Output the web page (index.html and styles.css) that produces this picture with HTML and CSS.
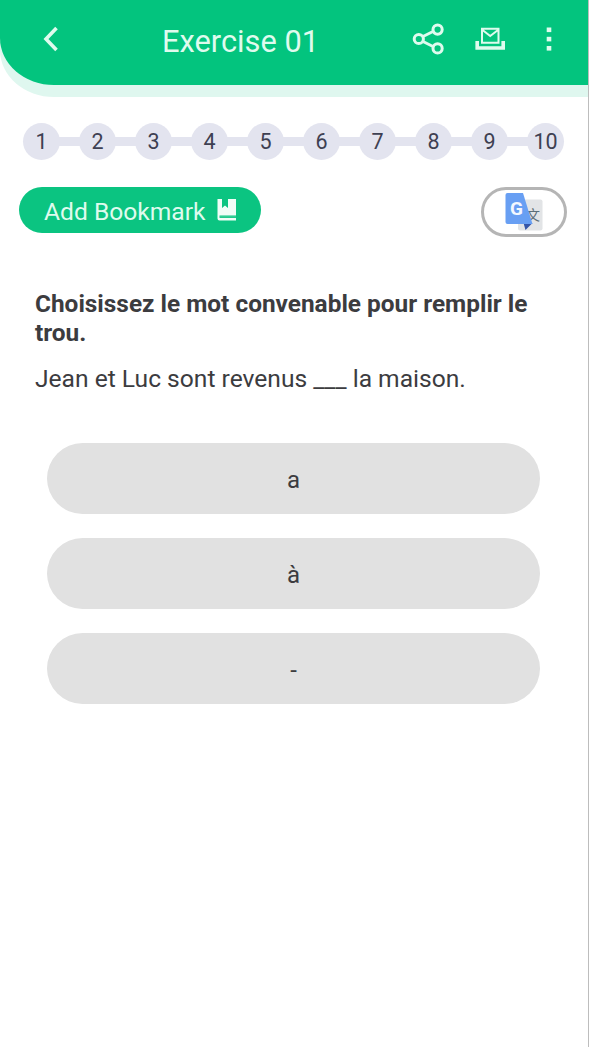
FILE: index.html
```
<!DOCTYPE html>
<html lang="fr">
<head>
<meta charset="UTF-8">
<meta name="viewport" content="width=device-width, initial-scale=1.0">
<title>Exercise 01</title>
<link rel="stylesheet" href="styles.css">
</head>
<body>
<div class="screen">
  <header>
    <svg class="back" width="16" height="26" viewBox="0 0 16 26"><path d="M14.5 2 L4 13 L14.5 24"/></svg>
    <h1>Exercise 01</h1>
    <svg class="share" width="32" height="32" viewBox="0 0 32 32">
      <path d="M6 16 L25 6.5 M6 16 L25 25.5"/>
      <circle cx="6.8" cy="16" r="4.6"/>
      <circle cx="25.6" cy="6.6" r="4.6"/>
      <circle cx="25.6" cy="25.4" r="4.6"/>
    </svg>
    <svg class="inbox" width="30" height="24" viewBox="0 0 30 24">
      <path class="tray" d="M2.2 14 V21 H28.2 V14"/>
      <path class="mail" d="M7 1.8 H23.5 V15.8 H7 Z M7.5 3 L15.2 9 L23 3"/>
    </svg>
    <svg class="menu" width="6" height="26" viewBox="0 0 6 26">
      <rect x="0.7" y="1.5" width="4.6" height="4.6"/>
      <rect x="0.7" y="10.8" width="4.6" height="4.6"/>
      <rect x="0.7" y="20" width="4.6" height="4.6"/>
    </svg>
  </header>

  <ol class="steps">
    <li>1</li>
    <li>2</li>
    <li>3</li>
    <li>4</li>
    <li>5</li>
    <li>6</li>
    <li>7</li>
    <li>8</li>
    <li>9</li>
    <li>10</li>
  </ol>

  <div class="tools">
    <button class="bookmark">
      <span>Add Bookmark</span>
      <svg width="20" height="24" viewBox="0 0 20 24">
        <path d="M0.5 1 H5 V10 L8 7.6 L11 10 V1 H19 V17.5 H2.5 V18.8 H19 V22.5 H2.5 Q0.5 22.5 0.5 20.5 Z"/>
        <path class="line" d="M2.5 19.3 H19"/>
      </svg>
    </button>
    <button class="translate">
      <svg width="40" height="40" viewBox="0 0 40 40">
        <rect class="page" x="14" y="7.5" width="24.5" height="31" rx="2"/>
        <text class="wen" x="29" y="28">文</text>
        <path class="fold" d="M19.5 31 H28.5 L21.5 38 Z"/>
        <path class="front" d="M3.5 1 H19 L28.5 32 H3.5 Q1.5 32 1.5 30 V3 Q1.5 1 3.5 1 Z"/>
        <text class="g" x="12.5" y="23">G</text>
      </svg>
    </button>
  </div>

  <main>
    <h2>Choisissez le mot convenable pour remplir le trou.</h2>
    <p>Jean et Luc sont revenus ___ la maison.</p>
    <div class="answers">
      <button class="answer">a</button>
      <button class="answer">à</button>
      <button class="answer">-</button>
    </div>
  </main>
</div>
</body>
</html>
```
FILE: styles.css
```
body {font-family: Roboto, sans-serif; background-color: #fff; color: #3c3c3f; margin: 0; padding: 0;}
svg {display: block; flex: none;}
button {font-family: inherit; border: none; cursor: pointer;}

.screen {
  box-sizing: border-box;
  min-height: 1047px;
  border-right: 1px solid #bdbdbd;
}

header {
  display: flex;
  align-items: center;
  box-sizing: border-box;
  height: 85px;
  padding: 0 36px 7px 42px;
  background-color: #03c47e;
  border-bottom-left-radius: 54px 47px;
  box-shadow: 0 12px 0 #dff7ef;
}
header h1 {
  width: 250px;
  margin: 4px 0 0 104px;
  color: #dffbee;
  font-size: 30.8px;
  font-weight: 400;
}
header path, header circle {fill: none; stroke: #dffbee;}
.back path {stroke-width: 3.6;}
.share path, .share circle {stroke-width: 3;}
.share circle {fill: #03c47e;}
.inbox {margin: 0 0 0 31px;}
.inbox .tray {stroke-width: 3.6;}
.inbox .mail {stroke-width: 2;}
.menu {margin-left: auto;}
.menu rect {fill: #dffbee;}

.steps {
  display: flex;
  gap: 19px;
  list-style: none;
  margin: 38px 0 0 23px;
  padding: 0;
}
.steps li {
  position: relative;
  width: 37px;
  height: 37px;
  border-radius: 50%;
  background-color: #e3e4ef;
  color: #3e4052;
  font-size: 21.5px;
  line-height: 38px;
  text-align: center;
}
/* connector to the previous step */
.steps li + li::before {
  content: "";
  position: absolute;
  top: 14px;
  left: -21px;
  width: 23px;
  height: 9px;
  background-color: #e3e4ef;
}

.tools {
  display: flex;
  justify-content: space-between;
  align-items: flex-start;
  margin: 27px 21px 0 19px;
}
.bookmark {
  display: flex;
  align-items: center;
  box-sizing: border-box;
  gap: 12px;
  width: 242px;
  height: 46px;
  padding: 0 0 0 25px;
  border-radius: 23px;
  background-color: #0bc481;
  color: #dffbee;
  font-size: 24.6px;
  white-space: nowrap;
}
.bookmark span {padding-top: 2px;}
.bookmark path {fill: #f0fdf7;}
.bookmark .line {fill: none; stroke: #0bc481; stroke-width: 1.2;}
.translate {
  display: flex;
  justify-content: center;
  align-items: center;
  box-sizing: border-box;
  width: 86px;
  height: 50px;
  padding: 0;
  border: 3.5px solid #b5b5b5;
  border-radius: 25px;
  background-color: #fff;
}
.translate text {text-anchor: middle;}
.page {fill: #e2e4e6;}
.fold {fill: #3556a8;}
.front {fill: #689ff3;}
.wen {font-family: "Noto Sans CJK SC", sans-serif; font-size: 14px; fill: #5d6f78;}
.g {font-size: 19px; font-weight: 700; fill: #f3f8ff;}

main {padding: 52px 40px 0 35px;}
main h2 {
  margin: 0;
  font-size: 24.4px;
  line-height: 29px;
}
main p {
  margin: 17px 0 0;
  font-size: 24.6px;
  line-height: 30px;
}

.answers {
  display: flex;
  flex-direction: column;
  gap: 24px;
  margin: 49px 8px 0 12px;
}
.answer {
  height: 71px;
  padding: 3px 0 0;
  border-radius: 36px;
  background-color: #e1e1e1;
  color: #3c3c3f;
  font-size: 24px;
}
```
